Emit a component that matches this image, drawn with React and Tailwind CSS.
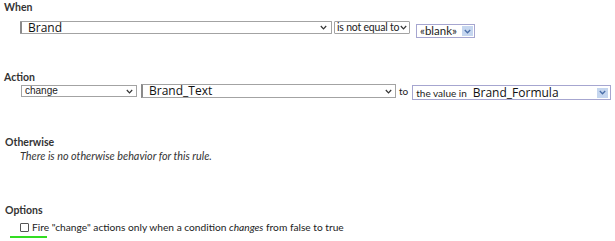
import React from "react";

function Chev({ className = "" }) {
  return (
    <svg width="7" height="5" viewBox="0 0 7 5" className={"shrink-0 " + className}>
      <polyline points="0.8,1 3.5,3.8 6.2,1" fill="none" stroke="#333" strokeWidth="1.2" />
    </svg>
  );
}

function BlueChev() {
  return (
    <svg width="7" height="5" viewBox="0 0 7 5">
      <polyline points="0.8,1 3.5,3.8 6.2,1" fill="none" stroke="#4a6ea8" strokeWidth="1.3" />
    </svg>
  );
}

export default function App() {
  return (
    <div className="w-[615px] h-[241px] bg-white text-[#333] relative overflow-hidden whitespace-nowrap" style={{ fontFamily: "Lato, 'Liberation Sans', sans-serif" }}>
      <div className="pl-[4px] pt-[1px] text-[10.5px] font-bold leading-[12px] h-[13px]">When</div>
      <div className="flex items-start mt-[8px] pl-[20px] h-[17px]">
        <div className="w-[312px] h-[13px] border border-[#a3a3a3] border-l-2 border-t-[1.5px] border-l-[#8a8a8a] flex items-center justify-between pl-[6px] pr-[4px] rounded-[1px]">
          <span className="text-[12px] leading-none text-[#111]" style={{ fontFamily: "'Open Sans', sans-serif" }}>Brand</span>
          <Chev />
        </div>
        <div className="ml-[2px] w-[76px] h-[13px] border border-[#a3a3a3] flex items-center justify-between pl-[2px] pr-[2px] rounded-[1px]">
          <span className="text-[10.5px] leading-none text-[#222] tracking-[-0.2px]">is not equal to</span>
          <Chev />
        </div>
        <div className="ml-[6px] mt-[3px] w-[59px] h-[14px] border border-[#a6a6d0] flex items-center justify-between pl-[3px] pr-[1px]">
          <span className="text-[11.5px] leading-none text-[#222]">«blank»</span>
          <div className="w-[11px] h-[10px] bg-[#c5d6ef] flex items-center justify-center"><BlueChev /></div>
        </div>
      </div>
      <div className="mt-[33px] pl-[4px] text-[10.5px] font-bold leading-[12px] h-[12px]">Action</div>
      <div className="flex items-start mt-[2px] pl-[21px] h-[16px]">
        <div className="w-[116px] h-[12px] border border-[#a3a3a3] flex items-center justify-between pl-[3px] pr-[3px]">
          <span className="text-[10px] leading-none text-[#222]" style={{ fontFamily: "'Liberation Sans', sans-serif" }}>change</span>
          <Chev />
        </div>
        <div className="ml-[4px] -mt-[1px] w-[255px] h-[14px] border border-[#a3a3a3] border-l-2 border-l-[#8a8a8a] flex items-center justify-between pl-[6px] pr-[3px]">
          <span className="text-[12px] leading-none text-[#111]" style={{ fontFamily: "'Open Sans', sans-serif" }}>Brand_Text</span>
          <Chev />
        </div>
        <span className="ml-[3px] text-[10px] leading-[12px] text-[#222]">to</span>
        <div className="ml-[4px] w-[199px] h-[15px] border border-[#a6a6d0] flex items-center pl-[3px] pr-[2px]">
          <span className="text-[10px] leading-none text-[#222]">the value in</span>
          <span className="ml-[6px] text-[12px] leading-none text-[#111]" style={{ fontFamily: "'Open Sans', sans-serif" }}>Brand_Formula</span>
          <div className="ml-auto w-[11px] h-[10px] bg-[#c5d6ef] flex items-center justify-center"><BlueChev /></div>
        </div>
      </div>
      <div className="mt-[35px] pl-[5px] text-[10.5px] font-bold leading-[12px] h-[12px]">Otherwise</div>
      <div className="mt-[2px] pl-[20px] text-[10.8px] italic leading-[12px] h-[12px] text-[#333]">There is no otherwise behavior for this rule.</div>
      <div className="mt-[42px] pl-[5px] text-[10.5px] font-bold leading-[12px] h-[12px]">Options</div>
      <div className="mt-[5px] pl-[20px] flex items-center h-[12px]">
        <div className="w-[9px] h-[9px] border border-[#555] rounded-[1px]"></div>
        <span className="ml-[3px] text-[10.2px] leading-none text-[#222]">Fire "change" actions only when a condition <i>changes</i> from false to true</span>
      </div>
      <div className="ml-[10px] mt-[3px] w-[37px] h-[2px] bg-[#33dd22]"></div>
    </div>
  );
}
